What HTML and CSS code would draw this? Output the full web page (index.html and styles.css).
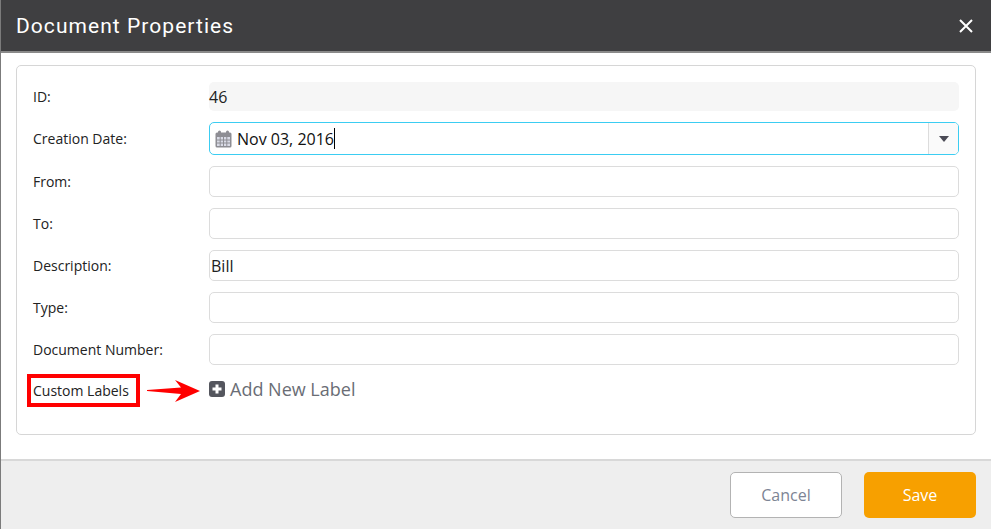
FILE: index.html
```html
<!DOCTYPE html>
<html lang="en">

<head>
    <title>Document Properties</title>
    <meta charset="UTF-8">
    <link rel="stylesheet" href="styles.css">
</head>

<body>
    <div class="dialog">
        <div class="dialog-head">
            <h3>Document Properties</h3>
            <svg class="close" width="14" height="14" viewBox="0 0 14 14">
                <path d="M1 1L13 13M13 1L1 13" stroke="#fff" stroke-width="2" fill="none" />
            </svg>
        </div>
        <div class="dialog-body">
            <div class="panel">
                <div class="form">
                    <label>ID:</label>
                    <div class="field readonly">46</div>

                    <label>Creation Date:</label>
                    <div class="field date">
                        <svg class="cal" width="17" height="18" viewBox="0 0 17 18">
                            <rect x="0.5" y="2.5" width="16" height="15" rx="1.5" fill="#8e8e94" />
                            <rect x="2" y="7" width="13" height="9" fill="#d9dbe6" />
                            <path d="M2 10H15M2 13H15M5.2 7V16M8.5 7V16M11.8 7V16" stroke="#8e8e94" stroke-width="1" />
                            <rect x="3" y="0.5" width="3" height="5" rx="1.5" fill="#8e8e94" />
                            <rect x="11" y="0.5" width="3" height="5" rx="1.5" fill="#8e8e94" />
                        </svg>
                        <span class="date-text">Nov 03, 2016</span>
                        <span class="caret"></span>
                        <span class="date-btn"><i></i></span>
                    </div>

                    <label>From:</label>
                    <div class="field"></div>

                    <label>To:</label>
                    <div class="field"></div>

                    <label>Description:</label>
                    <div class="field">Bill</div>

                    <label>Type:</label>
                    <div class="field"></div>

                    <label>Document Number:</label>
                    <div class="field"></div>

                    <label class="custom"><span class="redbox">Custom Labels</span></label>
                    <div class="add-label">
                        <svg class="arrow" width="53" height="22" viewBox="0 0 53 22">
                            <path d="M0 10L34 7.5L28 0L53 11L28 22L34 14L0 11Z" fill="#f00" />
                        </svg>
                        <svg width="16" height="16" viewBox="0 0 16 16">
                            <rect width="16" height="16" rx="3" fill="#54565e" />
                            <path d="M8 3.5V12.5M3.5 8H12.5" stroke="#fff" stroke-width="3" />
                        </svg>
                        <span>Add New Label</span>
                    </div>
                </div>
            </div>
        </div>
        <div class="dialog-foot">
            <button class="btn cancel">Cancel</button>
            <button class="btn save">Save</button>
        </div>
    </div>
</body>

</html>
```

FILE: styles.css
```css
html,
body {
    margin: 0;
    height: 100%;
}
body {
    background-color: #fff;
    font-family: "Open Sans", "Noto Sans", sans-serif;
    color: #222;
    overflow: hidden;
}
.dialog {
    display: flex;
    flex-direction: column;
    height: 529px;
    border-left: 1px solid #7b7b7b;
    box-sizing: border-box;
}
.dialog-head {
    display: flex;
    align-items: center;
    justify-content: space-between;
    height: 51px;
    padding: 0 18px 0 15px;
    background-color: #3f3f41;
    border-bottom: 2px solid #8a8a8a;
}
.dialog-head h3 {
    margin: 0;
    font-family: Roboto, sans-serif;
    font-size: 21px;
    font-weight: 400;
    letter-spacing: 1.05px;
    color: #fff;
}
.dialog-body {
    flex: 1;
    padding: 12px 15px 24px;
    border-bottom: 2px solid #d8d8d8;
}
.panel {
    height: 370px;
    box-sizing: border-box;
    padding: 16px;
    border: 1px solid #d6d6d6;
    border-radius: 5px;
}
.form {
    display: grid;
    grid-template-columns: 176px 1fr;
    row-gap: 11px;
    align-items: center;
}
.form label {
    font-size: 14px;
}
.field {
    display: flex;
    align-items: center;
    height: 31px;
    box-sizing: border-box;
    padding: 0 1px;
    border: 1px solid #dcdcdc;
    border-radius: 5px;
    font-size: 16px;
}
.readonly {
    height: 29px;
    padding-left: 0;
    border: none;
    background-color: #f6f6f6;
}
.date {
    height: 33px;
    padding: 0 0 0 5px;
    border-color: #3bcdf2;
    overflow: hidden;
}
.date-text {
    margin-left: 5px;
    color: #111;
}
.caret {
    width: 1px;
    height: 21px;
    background-color: #000;
}
.date-btn {
    display: flex;
    align-items: center;
    justify-content: center;
    width: 29px;
    height: 100%;
    margin-left: auto;
    background-color: #fafafa;
    border-left: 1px solid #dcdcdc;
}
.date-btn i {
    border-top: 6px solid #4a4a55;
    border-left: 5.5px solid transparent;
    border-right: 5.5px solid transparent;
}
.custom {
    position: relative;
    height: 26px;
}
.redbox {
    position: absolute;
    left: -6px;
    top: -2px;
    padding: 3px 7px 3px 2px;
    border: 4px solid #f00;
    background-color: #fff;
    white-space: nowrap;
}
.add-label {
    position: relative;
    display: flex;
    align-items: center;
    gap: 5px;
    height: 26px;
    font-size: 18px;
    color: #6a6d75;
}
.arrow {
    position: absolute;
    left: -62px;
    top: 4px;
}
.dialog-foot {
    display: flex;
    justify-content: flex-end;
    gap: 22px;
    height: 68px;
    box-sizing: border-box;
    padding: 11px 15px 0 0;
    background-color: #eee;
}
.btn {
    width: 112px;
    height: 46px;
    border-radius: 5px;
    font-family: "Open Sans", "Noto Sans", sans-serif;
    font-size: 16px;
}
.cancel {
    background-color: #fff;
    border: 1px solid #b3b3b3;
    color: #7d8494;
}
.save {
    background-color: #f7a000;
    border: none;
    color: #fff;
}
```
